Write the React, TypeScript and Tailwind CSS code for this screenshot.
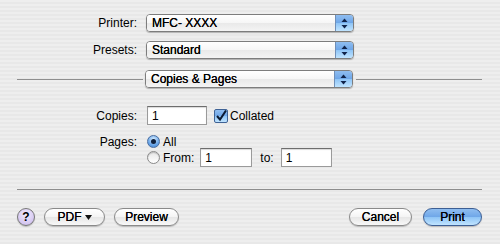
import React from 'react'

const font = { fontFamily: '"Liberation Sans", Arial, sans-serif' }

const Arrows: React.FC = () => (
  <svg width="7" height="11" viewBox="0 0 7 11">
    <path d="M3.5 0.5 L6.5 4 L0.5 4 Z" fill="#10234a" />
    <path d="M3.5 10.5 L6.5 7 L0.5 7 Z" fill="#10234a" />
  </svg>
)

const Popup: React.FC<{ label: string }> = ({ label }) => (
  <div className="flex h-[18px] w-[208px] shrink-0 overflow-hidden rounded-[4px] border border-[#7d7d7d] shadow-[0_1px_1px_rgba(0,0,0,0.25)]">
    <div className="flex flex-1 items-center bg-[linear-gradient(to_bottom,#ffffff,#f6f6f6_50%,#e9e9e9_51%,#f4f4f4)] pl-[5px] text-[12px] text-black [text-shadow:0_0_0.4px_#000]">
      {label}
    </div>
    <div className="flex w-[18px] items-center justify-center border-l border-[#6f8fb8] bg-[linear-gradient(to_bottom,#8fbdf0,#6ea6e8_50%,#8ec4f6_51%,#c0e4ff)]">
      <Arrows />
    </div>
  </div>
)

const Field: React.FC<{ value: string; w: string }> = ({ value, w }) => (
  <div
    className={`flex h-[19px] ${w} items-center border border-[#9a9a9a] border-t-[#6d6d6d] bg-white pl-[4px] text-[12px] text-black shadow-[inset_0_1px_1px_rgba(0,0,0,0.15)]`}
  >
    {value}
  </div>
)

const Radio: React.FC<{ on?: boolean }> = ({ on }) =>
  on ? (
    <div className="flex h-[13px] w-[13px] items-center justify-center rounded-full border border-[#4a6ea0] bg-[radial-gradient(circle_at_50%_30%,#d6ecff,#6aa6e8_60%,#3f7fd0)]">
      <div className="h-[5px] w-[5px] rounded-full bg-[#10203c]" />
    </div>
  ) : (
    <div className="h-[13px] w-[13px] rounded-full border border-[#8a8a8a] bg-[linear-gradient(to_bottom,#e6e6e6,#ffffff)] shadow-[inset_0_1px_1px_rgba(0,0,0,0.2)]" />
  )

const Pill: React.FC<{ children: React.ReactNode; w: string; blue?: boolean }> = ({ children, w, blue }) => (
  <div
    className={`flex h-[18px] ${w} items-center justify-center rounded-full border text-[12px] text-black shadow-[0_1px_1px_rgba(0,0,0,0.2)] [text-shadow:0_0_0.4px_#000] ${
      blue
        ? 'border-[#3d5f94] bg-[linear-gradient(to_bottom,#8fbdf0,#6ea6e8_50%,#8ec4f6_51%,#c0e4ff)]'
        : 'border-[#8a8a8a] bg-[linear-gradient(to_bottom,#ffffff,#f4f4f4_50%,#e6e6e6_51%,#f8f8f8)]'
    }`}
  >
    {children}
  </div>
)

const Label: React.FC<{ children: React.ReactNode }> = ({ children }) => (
  <div className="w-[121px] shrink-0 pr-[1px] text-right text-[12px] text-black">{children}</div>
)

export default function App() {
  return (
    <div
      style={font}
      className="flex h-[244px] w-[500px] flex-col bg-[repeating-linear-gradient(to_bottom,#eeeeee_0px,#eeeeee_2px,#e8e8e8_2px,#e8e8e8_4px)] pl-[17px] pr-[18px]"
    >
      <div className="mt-[14px] flex items-center gap-[8px]">
        <Label>Printer:</Label>
        <Popup label="MFC- XXXX" />
      </div>
      <div className="mt-[9px] flex items-center gap-[8px]">
        <Label>Presets:</Label>
        <Popup label="Standard" />
      </div>
      <div className="mt-[11px] flex items-center">
        <div className="mr-[2px] h-px flex-1 bg-[#8e8e8e]" />
        <Popup label="Copies & Pages" />
        <div className="ml-[3px] h-px flex-1 bg-[#8e8e8e]" />
      </div>

      <div className="mt-[18px] flex items-center">
        <Label>Copies:</Label>
        <div className="ml-[9px]">
          <Field value="1" w="w-[60px]" />
        </div>
        <div className="ml-[7px] flex h-[14px] w-[14px] items-center justify-center rounded-[2px] border border-[#3f6396] bg-[linear-gradient(to_bottom,#8fbdf0,#6ea6e8_50%,#8ec4f6_51%,#c0e4ff)]">
          <svg width="12" height="12" viewBox="0 0 12 12">
            <path d="M2 6 L5 9.5 L11 0.5" fill="none" stroke="#0c1a33" strokeWidth="2" />
          </svg>
        </div>
        <span className="ml-[2px] text-[12px] text-black">Collated</span>
      </div>

      <div className="mt-[10px] flex h-[13px] items-center">
        <Label>Pages:</Label>
        <div className="ml-[9px]">
          <Radio on />
        </div>
        <span className="ml-[3px] text-[12px] text-black">All</span>
      </div>
      <div className="flex h-[19px] items-center">
        <div className="w-[121px] shrink-0" />
        <div className="ml-[9px]">
          <Radio />
        </div>
        <span className="ml-[3px] text-[12px] text-black">From:</span>
        <div className="ml-[6px]">
          <Field value="1" w="w-[52px]" />
        </div>
        <span className="ml-[8px] text-[12px] text-black">to:</span>
        <div className="ml-[7px]">
          <Field value="1" w="w-[51px]" />
        </div>
      </div>

      <div className="mt-[22px] h-px bg-[#8e8e8e]" />

      <div className="mt-[18px] flex items-center">
        <div className="flex h-[18px] w-[18px] items-center justify-center rounded-full border border-[#777] bg-[radial-gradient(circle_at_50%_35%,#f2ecff,#d4c6f0_70%,#b7a6de)] text-[12px] font-bold text-black shadow-[0_1px_1px_rgba(0,0,0,0.2)]">
          ?
        </div>
        <div className="ml-[9px]">
          <Pill w="w-[61px]">
            PDF
            <svg className="ml-[3px]" width="7" height="5" viewBox="0 0 7 5">
              <path d="M0 0 L7 0 L3.5 5 Z" fill="#111" />
            </svg>
          </Pill>
        </div>
        <div className="ml-[9px]">
          <Pill w="w-[65px]">Preview</Pill>
        </div>
        <div className="flex-1" />
        <Pill w="w-[63px]">Cancel</Pill>
        <div className="ml-[11px]">
          <Pill w="w-[59px]" blue>
            Print
          </Pill>
        </div>
      </div>
    </div>
  )
}
